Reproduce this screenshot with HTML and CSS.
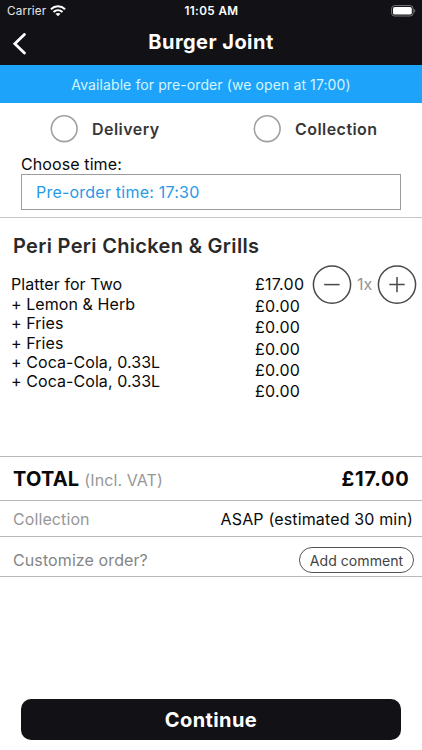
FILE: index.html
```html
<!DOCTYPE html>
<html lang="en">
<head>
<meta charset="utf-8">
<title>Burger Joint</title>
<link rel="stylesheet" href="styles.css">
</head>
<body>
<div class="app">
  <header class="top">
    <div class="status">
      <div class="carrier"><span class="carrier-name">Carrier</span>
        <svg class="wifi" width="16" height="12" viewBox="0 0 16 12"><g fill="none" stroke="#fff" stroke-width="2"><path d="M.9 4.2C4.9.4 11.1.4 15.1 4.2"/><path d="M3.5 7C6.1 4.6 9.9 4.6 12.5 7"/></g><path d="M5.5 8.8C7 7.6 9 7.6 10.5 8.8L8 11.3z" fill="#fff"/></svg>
      </div>
      <span class="clock">11:05 AM</span>
      <svg class="battery" width="25" height="12" viewBox="0 0 25 12"><rect x=".6" y=".6" width="21.6" height="10.4" rx="3" fill="none" stroke="#77777b"/><rect x="2" y="2" width="18.8" height="7.6" rx="1.7" fill="#fff"/><path d="M23.2 4v3.6c1.5-.5 1.5-3.1 0-3.6z" fill="#77777b"/></svg>
    </div>
    <div class="nav">
      <svg class="back" width="14" height="22" viewBox="0 0 14 22"><path d="M12.4 1.4 2.8 10.7l9.6 9.3" fill="none" stroke="#fff" stroke-width="2.8" stroke-linecap="round" stroke-linejoin="miter"/></svg>
      <h1 class="title">Burger Joint</h1>
      <span></span>
    </div>
  </header>
  <div class="banner"><span class="banner-text">Available for pre-order (we open at 17:00)</span></div>
  <section class="options">
    <div class="modes">
      <div class="mode"><svg class="radio" width="28" height="28" viewBox="0 0 28 28"><circle cx="14.2" cy="13.7" r="12.9" fill="none" stroke="#a0a0a0" stroke-width="1.6"/></svg><span class="delivery">Delivery</span></div>
      <div class="mode"><svg class="radio" width="28" height="28" viewBox="0 0 28 28"><circle cx="14.2" cy="13.7" r="12.9" fill="none" stroke="#a0a0a0" stroke-width="1.6"/></svg><span class="collection">Collection</span></div>
    </div>
    <div class="choose"><span class="choose-text">Choose time:</span></div>
    <div class="time"><span class="time-text">Pre-order time: 17:30</span></div>
  </section>
  <section class="order">
    <h2 class="category"><span class="category-text">Peri Peri Chicken &amp; Grills</span></h2>
    <div class="item">
      <div class="names"><div>Platter for Two</div><div>+ Lemon &amp; Herb</div><div>+ Fries</div><div>+ Fries</div><div>+ Coca-Cola, 0.33L</div><div>+ Coca-Cola, 0.33L</div></div>
      <div class="prices"><div>£17.00</div><div>£0.00</div><div>£0.00</div><div>£0.00</div><div>£0.00</div><div>£0.00</div></div>
      <div class="stepper">
        <svg width="40" height="40" viewBox="0 0 40 40" fill="none" stroke="#4a4849" stroke-width="1.5"><circle cx="20" cy="20.6" r="18.6"/><path d="M12.2 20.6h15.4"/></svg>
        <span class="qty">1x</span>
        <svg width="40" height="40" viewBox="0 0 40 40" fill="none" stroke="#4a4849" stroke-width="1.5"><circle cx="20" cy="20.6" r="18.6"/><path d="M12.3 20.6h15.4M20 12.9v15.4"/></svg>
      </div>
    </div>
  </section>
  <div class="row total"><div><strong class="total-label">TOTAL</strong><span class="vat">(Incl. VAT)</span></div><strong class="sum">£17.00</strong></div>
  <div class="row pickup"><span class="label">Collection</span><span class="asap">ASAP (estimated 30 min)</span></div>
  <div class="row custom"><span class="label customize">Customize order?</span><div class="comment"><span class="comment-text">Add comment</span></div></div>
  <footer class="footer"><div class="continue"><span class="continue-text">Continue</span></div></footer>
</div>
</body>
</html>
```
FILE: styles.css
```css
* { box-sizing: border-box; }
body { margin: 0; background: #fff; font-family: Inter, "Liberation Sans", sans-serif; color: #0a0a0a; font-size: 16px; }
svg { display: block; flex: none; }
h1, h2 { margin: 0; }
span, div, strong { white-space: nowrap; }
.app { width: 422px; height: 750px; display: flex; flex-direction: column; overflow: hidden; }
.top { height: 65px; background: #121216; color: #fff; flex: none; }
.status { height: 22px; display: grid; grid-template-columns: 1fr auto 1fr; align-items: center; padding: 0 6px 0 7px; font-size: 11.7px; }
.carrier { display: flex; align-items: center; gap: 4px; color: #e5e5e7; }
.carrier-name { letter-spacing: .15px; }
.clock { font-weight: 600; font-size: 11.7px; letter-spacing: .4px; }
.battery { justify-self: end; }
.nav { height: 43px; display: grid; grid-template-columns: 1fr auto 1fr; align-items: center; padding: 0 12px; }
.title { font-size: 20px; line-height: 24px; font-weight: 700; margin-top: -3px; letter-spacing: .45px; }
.banner { height: 38px; flex: none; background: #1ea3fa; color: #d5f5ff; display: flex; align-items: center; justify-content: center; font-size: 14px; letter-spacing: .1px; }
.options { height: 115px; flex: none; border-bottom: 1px solid #c5c5c5; padding: 8px 21px 0; }
.modes { height: 35px; display: grid; grid-template-columns: 203px 1fr; padding-left: 29px; }
.mode { display: flex; align-items: center; gap: 14px; font-weight: 600; color: #393637; letter-spacing: .45px; }
.choose { height: 28px; line-height: 36px; letter-spacing: .1px; }
.time { height: 36px; border: 1px solid #9b9b9b; padding-left: 14px; line-height: 35px; color: #269ae8; letter-spacing: .22px; }
.order { height: 239px; flex: none; border-bottom: 1px solid #bababa; padding-left: 11px; }
.category { padding: 16px 0 0 2px; font-size: 20px; line-height: 24px; font-weight: 600; color: #292929; letter-spacing: .32px; }
.item { display: grid; grid-template-columns: 244px 58px 1fr; align-items: start; margin-top: 6px; }
.names { line-height: 19.4px; padding-top: 11.3px; letter-spacing: .07px; }
.prices { line-height: 21.4px; padding-top: 10.3px; letter-spacing: .25px; }
.stepper { display: flex; align-items: center; width: 105px; justify-content: space-between; margin-left: -1px; color: #949494; }
.row { display: flex; justify-content: space-between; align-items: center; border-bottom: 1px solid #bababa; flex: none; padding-left: 13px; }
.label, .vat { color: #979797; letter-spacing: .1px; }
.total { height: 44px; padding-right: 13px; font-size: 20px; }
.total-label { letter-spacing: .2px; }
.sum { letter-spacing: .75px; margin-right: -.6px; }
.vat { font-size: 16px; margin-left: 5px; }
.pickup { height: 36px; padding-right: 9px; }
.asap { letter-spacing: .15px; }
.custom { height: 40px; padding-right: 8px; padding-top: 7px; }
.customize { color: #858585; }
.comment { width: 115px; height: 26px; border: 1px solid #555; border-radius: 13px; display: flex; align-items: center; justify-content: center; font-size: 14.1px; color: #444; }
.footer { margin-top: auto; padding: 0 21px 10px; }
.continue { height: 41px; border-radius: 10px; background: #121216; color: #fff; display: flex; align-items: center; justify-content: center; font-size: 20px; line-height: 24px; font-weight: 700; letter-spacing: .4px; }
```
